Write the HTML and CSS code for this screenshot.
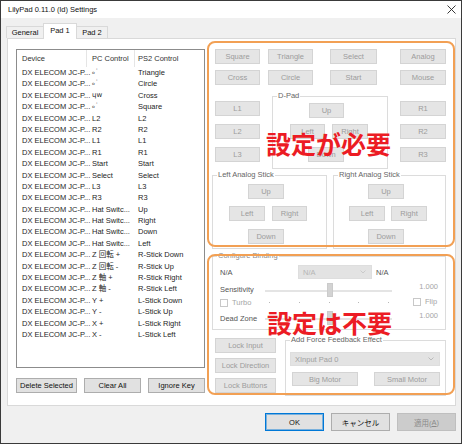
FILE: index.html
```html
<!DOCTYPE html>
<html lang="ja">
<head>
<meta charset="utf-8">
<title>LilyPad Settings</title>
<link rel="stylesheet" href="styles.css">
</head>
<body>
<div class="window">
  <div class="titlebar">
    <span class="title">LilyPad 0.11.0 (ld) Settings</span>
    <svg class="close" width="9" height="9" viewBox="0 0 9 9"><path d="M0.5 0.5 L8.5 8.5 M8.5 0.5 L0.5 8.5" stroke="#222" stroke-width="0.9" fill="none"/></svg>
  </div>
  <div class="client">
    <div class="tabs">
      <div class="tab t-general">General</div>
      <div class="tab t-pad1 active">Pad 1</div>
      <div class="tab t-pad2">Pad 2</div>
    </div>
    <div class="panel">
      <div class="leftcol">
        <div class="list">
          <div class="lhead"><span class="c1">Device</span><span class="c2">PC Control</span><span class="c3">PS2 Control</span></div>
          <div class="lrow"><span class="c1">DX ELECOM JC-P...</span><span class="c2 gl">ₒ˙</span><span class="c3">Triangle</span></div>
          <div class="lrow"><span class="c1">DX ELECOM JC-P...</span><span class="c2 gl">ₒ˙</span><span class="c3">Circle</span></div>
          <div class="lrow"><span class="c1">DX ELECOM JC-P...</span><span class="c2 gl">ɥw</span><span class="c3">Cross</span></div>
          <div class="lrow"><span class="c1">DX ELECOM JC-P...</span><span class="c2 gl">ₒ˙</span><span class="c3">Square</span></div>
          <div class="lrow"><span class="c1">DX ELECOM JC-P...</span><span class="c2">L2</span><span class="c3">L2</span></div>
          <div class="lrow"><span class="c1">DX ELECOM JC-P...</span><span class="c2">R2</span><span class="c3">R2</span></div>
          <div class="lrow"><span class="c1">DX ELECOM JC-P...</span><span class="c2">L1</span><span class="c3">L1</span></div>
          <div class="lrow"><span class="c1">DX ELECOM JC-P...</span><span class="c2">R1</span><span class="c3">R1</span></div>
          <div class="lrow"><span class="c1">DX ELECOM JC-P...</span><span class="c2">Start</span><span class="c3">Start</span></div>
          <div class="lrow"><span class="c1">DX ELECOM JC-P...</span><span class="c2">Select</span><span class="c3">Select</span></div>
          <div class="lrow"><span class="c1">DX ELECOM JC-P...</span><span class="c2">L3</span><span class="c3">L3</span></div>
          <div class="lrow"><span class="c1">DX ELECOM JC-P...</span><span class="c2">R3</span><span class="c3">R3</span></div>
          <div class="lrow"><span class="c1">DX ELECOM JC-P...</span><span class="c2">Hat Switc...</span><span class="c3">Up</span></div>
          <div class="lrow"><span class="c1">DX ELECOM JC-P...</span><span class="c2">Hat Switc...</span><span class="c3">Right</span></div>
          <div class="lrow"><span class="c1">DX ELECOM JC-P...</span><span class="c2">Hat Switc...</span><span class="c3">Down</span></div>
          <div class="lrow"><span class="c1">DX ELECOM JC-P...</span><span class="c2">Hat Switc...</span><span class="c3">Left</span></div>
          <div class="lrow"><span class="c1">DX ELECOM JC-P...</span><span class="c2">Z 回転 +</span><span class="c3">R-Stick Down</span></div>
          <div class="lrow"><span class="c1">DX ELECOM JC-P...</span><span class="c2">Z 回転 -</span><span class="c3">R-Stick Up</span></div>
          <div class="lrow"><span class="c1">DX ELECOM JC-P...</span><span class="c2">Z 軸 +</span><span class="c3">R-Stick Right</span></div>
          <div class="lrow"><span class="c1">DX ELECOM JC-P...</span><span class="c2">Z 軸 -</span><span class="c3">R-Stick Left</span></div>
          <div class="lrow"><span class="c1">DX ELECOM JC-P...</span><span class="c2">Y +</span><span class="c3">L-Stick Down</span></div>
          <div class="lrow"><span class="c1">DX ELECOM JC-P...</span><span class="c2">Y -</span><span class="c3">L-Stick Up</span></div>
          <div class="lrow"><span class="c1">DX ELECOM JC-P...</span><span class="c2">X +</span><span class="c3">L-Stick Right</span></div>
          <div class="lrow"><span class="c1">DX ELECOM JC-P...</span><span class="c2">X -</span><span class="c3">L-Stick Left</span></div>
        </div>
        <div class="listbtns">
          <div class="btn w-del">Delete Selected</div>
          <div class="btn w-57">Clear All</div>
          <div class="btn w-57">Ignore Key</div>
        </div>
      </div>

      <div class="rightcol">
        <div class="brow">
          <div class="btn dis b-sq">Square</div>
          <div class="btn dis b-tri">Triangle</div>
          <div class="btn dis b-sel">Select</div>
          <div class="btn dis b-ana">Analog</div>
        </div>
        <div class="brow r2">
          <div class="btn dis b-sq">Cross</div>
          <div class="btn dis b-tri">Circle</div>
          <div class="btn dis b-sel">Start</div>
          <div class="btn dis b-ana">Mouse</div>
        </div>
        <div class="mid">
          <div class="scol lcol">
            <div class="btn dis">L1</div>
            <div class="btn dis">L2</div>
            <div class="btn dis">L3</div>
          </div>
          <fieldset class="grp dpad">
            <legend>D-Pad</legend>
            <div class="btn dis sm dp-up">Up</div>
            <div class="lr dp-lr"><div class="btn dis sm">Left</div><div class="btn dis sm w36">Right</div></div>
            <div class="btn dis sm w36 dp-down">Down</div>
          </fieldset>
          <div class="scol rcol">
            <div class="btn dis">R1</div>
            <div class="btn dis">R2</div>
            <div class="btn dis">R3</div>
          </div>
        </div>
        <div class="sticks">
          <fieldset class="grp stick lstick">
            <legend>Left Analog Stick</legend>
            <div class="btn dis sm w36 s-up">Up</div>
            <div class="lr s-lr"><div class="btn dis sm w36">Left</div><div class="btn dis sm">Right</div></div>
            <div class="btn dis sm w36 s-down">Down</div>
          </fieldset>
          <fieldset class="grp stick rstick">
            <legend>Right Analog Stick</legend>
            <div class="btn dis sm w36 s-up">Up</div>
            <div class="lr s-lr"><div class="btn dis sm w36">Left</div><div class="btn dis sm w36">Right</div></div>
            <div class="btn dis sm w36 s-down">Down</div>
          </fieldset>
        </div>
        <fieldset class="grp config">
          <legend class="legend-dim">Configure Binding</legend>
          <div class="narow">
            <span class="na-label">N/A</span>
            <div class="combo na-combo"><span>N/A</span><svg width="6" height="4" viewBox="0 0 6 4"><path d="M0.5 0.5 L3 3 L5.5 0.5" stroke="#c4c4c4" stroke-width="0.8" fill="none"/></svg></div>
            <span class="na-right">N/A</span>
          </div>
          <div class="sens">
            <div class="scol1">
              <div class="slabel">Sensitivity</div>
              <div class="check"><span class="box"></span><span class="ctext">Turbo</span></div>
            </div>
            <div class="slider">
              <div class="track"><span class="thumb"></span></div>
              <div class="ticks"><i></i><i></i><i></i><i></i><i></i></div>
            </div>
            <div class="scol3">
              <div class="val">1.000</div>
              <div class="check flip"><span class="box"></span><span class="ctext">Flip</span></div>
            </div>
          </div>
          <div class="dead">
            <div class="dlabel">Dead Zone</div>
            <div class="slider dslider"><div class="track"><span class="thumb"></span></div></div>
            <div class="val dval">1.000</div>
          </div>
        </fieldset>
        <div class="lower">
          <div class="locks">
            <div class="btn dis">Lock Input</div>
            <div class="btn dis">Lock Direction</div>
            <div class="btn dis">Lock Buttons</div>
          </div>
          <fieldset class="grp ff">
            <legend>Add Force Feedback Effect</legend>
            <div class="combo ff-combo"><span>XInput Pad 0</span><svg width="6" height="4" viewBox="0 0 6 4"><path d="M0.5 0.5 L3 3 L5.5 0.5" stroke="#b0b0b0" stroke-width="0.8" fill="none"/></svg></div>
            <div class="motors">
              <div class="btn dis motor">Big Motor</div>
              <div class="btn dis motor">Small Motor</div>
            </div>
          </fieldset>
        </div>
      </div>
    </div>
    <div class="dlgbtns">
      <div class="btn dbtn ok">OK</div>
      <div class="btn dbtn">キャンセル</div>
      <div class="btn dbtn apply">適用(<u>A</u>)</div>
    </div>
  </div>

  <div class="anno anno1"></div>
  <div class="anno anno2"></div>
  <div class="redtext red1">設定が必要</div>
  <div class="redtext red2">設定は不要</div>
</div>
</body>
</html>
```

FILE: styles.css
```css
* { box-sizing: border-box; }
html, body { margin: 0; padding: 0; }
body {
  width: 462px; height: 444px; overflow: hidden;
  font-family: "Liberation Sans", "Noto Sans CJK JP", sans-serif;
  font-size: 7.5px; color: #000; background: #f0f0f0;
}
.window {
  position: relative; width: 462px; height: 444px;
  border: 1px solid #3a3a3a; background: #f0f0f0;
  display: flex; flex-direction: column;
}
.titlebar {
  height: 17px; flex: none; background: #fff;
  display: flex; align-items: center; justify-content: space-between;
  padding: 0 5px 0 7px;
}
.title { font-size: 7.5px; color: #111; }
.close { display: block; }
.client { flex: 1; padding-top: 5px; }

/* tabs */
.tabs { display: flex; align-items: flex-end; height: 15px; margin-left: 5px; position: relative; z-index: 1; }
.tab {
  height: 12px; border: 1px solid #d9d9d9; border-bottom: none; background: #f0f0f0;
  display: flex; align-items: center; justify-content: center; color: #111;
}
.t-general { width: 37px; border-right: none; }
.t-pad1 { width: 34px; }
.t-pad2 { width: 31px; border-left: none; }
.tab.active { height: 16px; background: #fff; margin-bottom: -1px; padding-bottom: 2px; }

/* panel */
.panel {
  margin-left: 6px; width: 449px; height: 368px; background: #fff;
  border: 1px solid #d9d9d9; padding: 10px 0 0 8px;
  display: flex; gap: 7px;
}
.leftcol { width: 189px; display: flex; flex-direction: column; }
.list { width: 189px; height: 319px; border: 1px solid #8c8c8c; background: #fff; }
.lhead { height: 17px; display: flex; align-items: center; color: #333; }
.lhead span { height: 17px; display: flex; align-items: center; }
.lhead .c1, .lhead .c2 { border-right: 1px solid #e5e5e5; }
.lrow { height: 11.4px; line-height: 11.4px; display: flex; white-space: nowrap; color: #1e1e1e; }
.c1 { width: 70px; padding-left: 5px; flex: none; }
.c2 { width: 48px; padding-left: 5px; flex: none; overflow: hidden; }
.c2.gl { font-family: "DejaVu Sans", sans-serif; font-size: 7px; }
.c3 { padding-left: 3px; flex: 1; }

/* buttons */
.btn {
  height: 15px; border: 1px solid #adadad; background: #e1e1e1;
  display: flex; align-items: center; justify-content: center;
  white-space: nowrap; color: #111; flex: none;
}
.btn.dis { border-color: #d4d4d4; background: #e5e5e5; color: #9c9c9c; }
.listbtns { display: flex; gap: 7px; margin-top: 10px; }
.w-del { width: 61px; }
.w-57 { width: 57px; }

/* right column */
.rightcol { width: 234px; display: flex; flex-direction: column; }
.brow { display: flex; height: 15px; }
.brow.r2 { margin-top: 6px; }
.b-sq { width: 45px; margin-left: 3px; }
.b-tri { width: 45px; margin-left: 8px; }
.b-sel { width: 47px; margin-left: 17px; }
.b-ana { width: 46px; margin-left: 23px; }

.mid { display: flex; height: 78px; margin-top: 6px; }
.scol { display: flex; flex-direction: column; gap: 8px; padding-top: 10px; }
.lcol { width: 45px; margin-left: 3px; }
.rcol { width: 46px; margin-left: 12px; }

.grp { border: 1px solid #dcdcdc; margin: 0; padding: 0; min-width: 0; }
.grp legend { font-size: 7.5px; line-height: 10px; height: 10px; padding: 0 1px; margin-left: 4px; color: #666; }
.grp legend.legend-dim { color: #8a8a8a; }

.sm { width: 35px; }
.w36 { width: 36px; }
.lr { display: flex; gap: 7px; }

.dpad { width: 116px; height: 78px; margin-left: 12px; }
.dp-up { margin: 2px 0 0 36px; }
.dp-lr { margin: 6px 0 0 17px; }
.dp-down { margin: 8px 0 0 35px; }

.sticks { display: flex; gap: 6px; margin-top: 1px; height: 79px; }
.stick { height: 79px; }
.lstick { width: 115px; }
.rstick { width: 113px; }
.s-up { margin: 4px 0 0 35px; }
.s-lr { margin: 7px 0 0 16px; }
.s-down { margin: 8px 0 0 35px; }
.rstick .s-up, .rstick .s-down { margin-left: 34px; }
.rstick .s-lr { margin-left: 15px; gap: 6px; }

/* configure binding */
.config { width: 234px; height: 79px; margin-top: 2px; }
.narow { display: flex; align-items: center; height: 14px; margin-top: 4px; padding-left: 7px; color: #555; }
.na-label { width: 78px; }
.combo {
  height: 14px; background: #e3e3e3; border: 1px solid #dedede;
  display: flex; align-items: center; justify-content: space-between;
  padding: 0 5px 0 4px; color: #b5b5b5;
}
.combo svg { display: block; }
.na-combo { width: 74px; }
.na-right { margin-left: 4px; }

.sens { display: flex; height: 25px; margin-top: 3px; padding-left: 7px; }
.scol1 { width: 45px; display: flex; flex-direction: column; }
.slabel { height: 16px; line-height: 16px; color: #555; }
.check { display: flex; align-items: center; height: 9px; }
.box { width: 8px; height: 8px; border: 1px solid #c8c8c8; background: #fff; flex: none; }
.ctext { margin-left: 4px; color: #a6a6a6; }
.slider { width: 127px; display: flex; flex-direction: column; }
.track {
  height: 16px; display: flex; align-items: center; padding-left: 62px;
  background: linear-gradient(#e4e4e4, #e4e4e4) no-repeat 0 8px / 100% 2px;
}
.thumb { width: 6px; height: 14px; background: #d3d3d3; border: 1px solid #cbcbcb; display: block; }
.ticks { display: flex; justify-content: space-between; align-items: center; height: 9px; padding: 0 3px 0 4px; }
.ticks i { width: 1px; height: 1px; background: #b8b8b8; display: block; }
.scol3 { width: 46px; display: flex; flex-direction: column; align-items: flex-end; }
.val { height: 10px; line-height: 10px; color: #a6a6a6; text-align: right; }
.flip { align-self: flex-start; margin-top: 5px; margin-left: 21px; }

.dead { display: flex; height: 22px; padding-left: 7px; align-items: center; }
.dlabel { width: 45px; color: #555; }
.dslider .track { height: 14px; background-position: 0 7px; }
.dval { width: 46px; align-self: flex-start; margin-top: 4px; }

/* lower */
.lower { display: flex; margin-top: 5px; }
.locks { width: 61px; margin-left: 3px; padding-top: 3px; display: flex; flex-direction: column; gap: 5px; }
.ff { width: 161px; height: 61px; margin-left: 9px; }
.ff-combo { width: 150px; margin: 7px 0 0 4px; color: #a0a0a0; }
.motors { display: flex; margin-top: 6px; height: 14px; }
.motor { width: 66px; height: 14px; }
.motor:first-child { margin-left: 6px; }
.motor + .motor { margin-left: 16px; }

/* dialog buttons */
.dlgbtns { display: flex; justify-content: flex-end; gap: 7px; margin-top: 7px; padding-right: 5px; }
.dbtn { width: 59px; height: 18px; }
.ok { border-color: #0078d7; box-shadow: inset 0 0 0 1px rgba(0, 120, 215, 0.45); }
.apply { background: #cccccc; border-color: #bfbfbf; color: #8a8a8a; }
.apply u { text-decoration: underline; }

/* annotations */
.anno { position: absolute; border: 2px solid #f2a054; border-radius: 8px; }
.anno1 { left: 206px; top: 40px; width: 248px; height: 206px; }
.anno2 { left: 206px; top: 253px; width: 248px; height: 141px; }
.redtext {
  position: absolute; font-family: "Noto Sans CJK JP", sans-serif; font-weight: 700;
  font-size: 25px; line-height: 25px; color: #ec1c24; white-space: nowrap;
}
.red1 { left: 265px; top: 130px; }
.red2 { left: 266px; top: 309px; }
```
